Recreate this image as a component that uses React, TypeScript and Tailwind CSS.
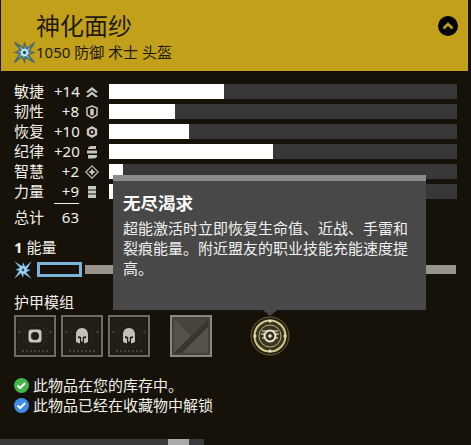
const font = { fontFamily: '"Noto Sans", "Noto Sans CJK SC", sans-serif' };

const burstPoints = Array.from({ length: 16 }, (_, i) => {
  const a = (i * Math.PI) / 8 - Math.PI / 4 + (i % 2 === 1 ? 0.2 : 0);
  const r = i % 4 === 0 ? 13.500 : i % 4 === 2 ? 8.500 : 4.200;
  return `${(10 + r * Math.cos(a)).toFixed(2)},${(10 + r * Math.sin(a)).toFixed(2)}`;
}).join(" ");

function Burst({ size = 20, outline = false }: { size?: number; outline?: boolean }) {
  return (
    <svg width={size} height={size} viewBox="-1 -1 22 22">
      <polygon points={burstPoints} fill="#86c6ee" stroke={outline ? "none" : "#4f6f66"} strokeWidth={outline ? 0 : 1.600} />
      <circle cx="10" cy="10" r="3.400" fill={outline ? "#a5d8f5" : "#c3e7fb"} />
      <circle cx="10" cy="10" r="1.600" fill="#1c4a70" />
    </svg>
  );
}

function StatIcon({ kind }: { kind: number }) {
  const c = "#c9c7c1";
  return (
    <svg width="14" height="14" viewBox="0 0 14 14" fill="none">
      {kind === 0 && (
        <>
          <path d="M1 7 7 2l6 5-2 1-4-3-4 3z" fill={c} />
          <path d="M1 11.500 7 6.500l6 5-2 1-4-3-4 3z" fill={c} />
        </>
      )}
      {kind === 1 && (
        <>
          <path d="M7 1 12 3v7l-5 3-5-3V3z" stroke={c} strokeWidth="1.500" />
          <rect x="5.200" y="3.800" width="3.600" height="6.400" rx="1" fill={c} />
        </>
      )}
      {kind === 2 && (
        <>
          <path d="M7 1 12.200 4v6L7 13 1.800 10V4z" fill={c} />
          <circle cx="7" cy="7" r="3" fill="#17130b" />
          <circle cx="7" cy="7" r="1.400" fill={c} />
        </>
      )}
      {kind === 3 && (
        <>
          <path d="M3 3.500Q3 1 7 1h4v3H3z" fill={c} />
          <path d="M2 5.500h10V8.500H2z" fill={c} />
          <path d="M3 10h9v1Q12 13.500 8 13.500H3z" fill={c} />
        </>
      )}
      {kind === 4 && (
        <>
          <path d="M7 .8 13.200 7 7 13.200.8 7z" stroke={c} strokeWidth="1.100" />
          <path d="M7 3.500 8.200 5.800 10.500 7 8.200 8.200 7 10.500 5.800 8.200 3.500 7 5.800 5.800z" fill={c} />
        </>
      )}
      {kind === 5 && (
        <>
          <rect x="3" y="1" width="8" height="3.500" fill={c} />
          <rect x="3" y="5.500" width="8" height="3" fill={c} />
          <rect x="3" y="9.500" width="8" height="3.500" fill={c} />
        </>
      )}
    </svg>
  );
}

const stats = [
  { name: "敏捷", val: "+14", w: 115 },
  { name: "韧性", val: "+8", w: 66 },
  { name: "恢复", val: "+10", w: 80 },
  { name: "纪律", val: "+20", w: 164 },
  { name: "智慧", val: "+2", w: 14 },
  { name: "力量", val: "+9", w: 5 },
];

function ModFrame({ helmet }: { helmet: boolean }) {
  return (
    <div className="w-[42px] h-[42px] border-2 border-[#6f6c63] bg-[#1a170f] p-[1px]">
      <div className="w-full h-full rounded-[3px] bg-[#211e15] flex items-center justify-center">
        <svg width="36" height="36" viewBox="0 0 36 36" fill="none">
          <circle cx="18" cy="18" r="11.500" stroke="#35322a" strokeWidth="1" strokeDasharray="1.500 1.500" />
          <path d="M5 33h26" stroke="#45423a" strokeWidth="2" strokeDasharray="2 2" />
          <circle cx="2.500" cy="14" r="1.500" fill="#3c392f" />
          <circle cx="33.500" cy="14" r="1.500" fill="#3c392f" />
          {helmet ? (
            <>
              <path d="M18 10c3.600 0 6 2.800 6 6.500v7.500l-3.500 1.500-1-1v-1h-3v1l-1 1L12 24v-7.500c0-3.700 2.400-6.500 6-6.500z" fill="#c4c0b6" />
              <path d="M14 18l3.200 1v7h1.600v-7l3.200-1v2l-2 .6v5.400h-4v-5.400l-2-.6z" fill="#211e15" />
            </>
          ) : (
            <>
              <rect x="11.500" y="11.500" width="13" height="13" rx="3" fill="#c9c5bb" />
              <circle cx="18" cy="18" r="4" fill="#211e15" />
            </>
          )}
        </svg>
      </div>
    </div>
  );
}

function CheckBadge({ color }: { color: string }) {
  return (
    <svg width="15" height="15" viewBox="0 0 15 15" className="shrink-0">
      <circle cx="7.500" cy="7.500" r="7.500" fill={color} />
      <path d="M3.500 7.500 6.200 10l5-5" stroke="#fff" strokeWidth="2" fill="none" />
    </svg>
  );
}

export default function App() {
  return (
    <div className="relative w-[471px] h-[445px] overflow-hidden bg-[#161209] text-[#f2f0ea] flex flex-col" style={font}>
      <header className="h-[71px] ml-px mr-[3px] bg-[#c2a01a] relative shrink-0 text-[#1e1a0c]">
        <div className="pl-[35px] pt-[8px] text-[24px] leading-[36px]">神化面纱</div>
        <div className="flex items-center pl-[12px] h-[20px] mt-[-2px] text-[15px] leading-[20px]">
          <Burst size={23} />
          <span>1050 防御 术士 头盔</span>
        </div>
        <div className="absolute left-[437px] top-[16px] w-[20px] h-[20px] rounded-full bg-black flex items-center justify-center">
          <svg width="12" height="10" viewBox="0 0 12 10" fill="none">
            <path d="M1.500 7.500 6 3l4.500 4.500" stroke="#c2a01a" strokeWidth="2.500" />
          </svg>
        </div>
      </header>

      <section className="pl-[14px] pr-[14px] pt-[13px] flex flex-col gap-[5px]">
        {stats.map((s, i) => (
          <div key={s.name} className="flex items-center h-[15px] text-[15px] leading-[15px]">
            <span className="w-[40px]">{s.name}</span>
            <span className="w-[25px] text-right">{s.val}</span>
            <span className="w-[30px] pl-[6px] flex items-center"><StatIcon kind={i} /></span>
            <div className="w-[348px] h-[15px] bg-[#38383a]">
              <div className="h-full bg-white" style={{ width: s.w }} />
            </div>
          </div>
        ))}
      </section>

      <div className="ml-[54px] mt-[4px] w-[25px] h-px bg-[#f2f0ea]" />

      <div className="flex items-center pl-[14px] mt-[3px] h-[20px] text-[15px]">
        <span className="w-[40px]">总计</span>
        <span className="w-[25px] text-right">63</span>
      </div>

      <div className="pl-[14px] mt-[10px] h-[20px] text-[15px] leading-[20px]">
        <b className="font-bold">1</b> 能量
      </div>

      <div className="flex items-center pl-[13px] mt-[5px] h-[15px]">
        <Burst size={20} outline />
        <div className="ml-[4px] w-[45px] h-[15px] border-[3px] border-[#7cb3d8]" />
        <div className="ml-[3px] w-[371px] h-[9px] bg-[#99958d]" />
      </div>

      <div className="pl-[14px] mt-[15px] h-[20px] text-[15px] leading-[20px]">护甲模组</div>

      <div className="flex items-center pl-[14px] mt-[3px]">
        <div className="flex gap-[5px]">
          <ModFrame helmet={false} />
          <ModFrame helmet />
          <ModFrame helmet />
        </div>
        <div className="ml-[20px] w-[42px] h-[42px] border-2 border-[#8a877d] bg-[#45423a] p-[2px]">
          <svg width="34" height="34" viewBox="0 0 34 34">
            <rect width="34" height="34" rx="4" fill="#55524a" />
            <path d="M0 0 17 17 34 0z" fill="#47443b" />
            <path d="M0 34 34 0v8L8 34z" fill="#38352e" />
          </svg>
        </div>
        <div className="ml-[38px]">
          <svg width="40" height="40" viewBox="0 0 40 40" fill="none">
            <circle cx="20" cy="20" r="19" fill="#241f12" stroke="#6e6232" />
            <circle cx="20" cy="20" r="15.500" fill="#3a3420" stroke="#d6c98c" strokeWidth="2" />
            <circle cx="20" cy="20" r="11" stroke="#bdb07a" strokeWidth="1" />
            <path d="M12 15h16M11 18h18M12 22h16" stroke="#b9b5a4" strokeWidth="1.500" />
            <circle cx="20" cy="20" r="5.500" stroke="#efe9d0" strokeWidth="2" fill="#3a3420" />
            <circle cx="20" cy="20" r="1.800" fill="#efe9d0" />
            <circle cx="20" cy="5" r="1.500" fill="#efe6b8" />
            <circle cx="20" cy="35" r="1.500" fill="#efe6b8" />
            <circle cx="5" cy="20" r="1.500" fill="#efe6b8" />
            <circle cx="35" cy="20" r="1.500" fill="#efe6b8" />
          </svg>
        </div>
      </div>

      <div className="pl-[14px] mt-[18px] flex flex-col text-[15px] leading-[20px]">
        <div className="flex items-center gap-[4px] h-[20px]">
          <CheckBadge color="#43b649" />
          <span>此物品在您的库存中。</span>
        </div>
        <div className="flex items-center gap-[4px] h-[20px]">
          <CheckBadge color="#3f8de8" />
          <span>此物品已经在收藏物中解锁</span>
        </div>
      </div>

      <div className="absolute left-0 top-[439px] w-[204px] h-[6px] bg-[#3a3a3a]">
        <div className="ml-[168px] w-[21px] h-full bg-[#a9a9a9]" />
      </div>

      <div className="absolute left-[113px] top-[175px] w-[313px] h-[135px] bg-[#484848] border-t-[6px] border-[#8b8b8b] px-[10px] text-white">
        <div className="mt-[8px] text-[17.500px] leading-[28px] font-bold">无尽渴求</div>
        <p className="mt-[1px] w-[290px] text-[15px] leading-[20px] text-[#f1f1f1]">
          超能激活时立即恢复生命值、近战、手雷和裂痕能量。附近盟友的职业技能充能速度提高。
        </p>
        <div className="absolute left-[150px] top-[129px] w-0 h-0 border-x-[7px] border-x-transparent border-t-[6px] border-t-[#484848]" />
      </div>
    </div>
  );
}
